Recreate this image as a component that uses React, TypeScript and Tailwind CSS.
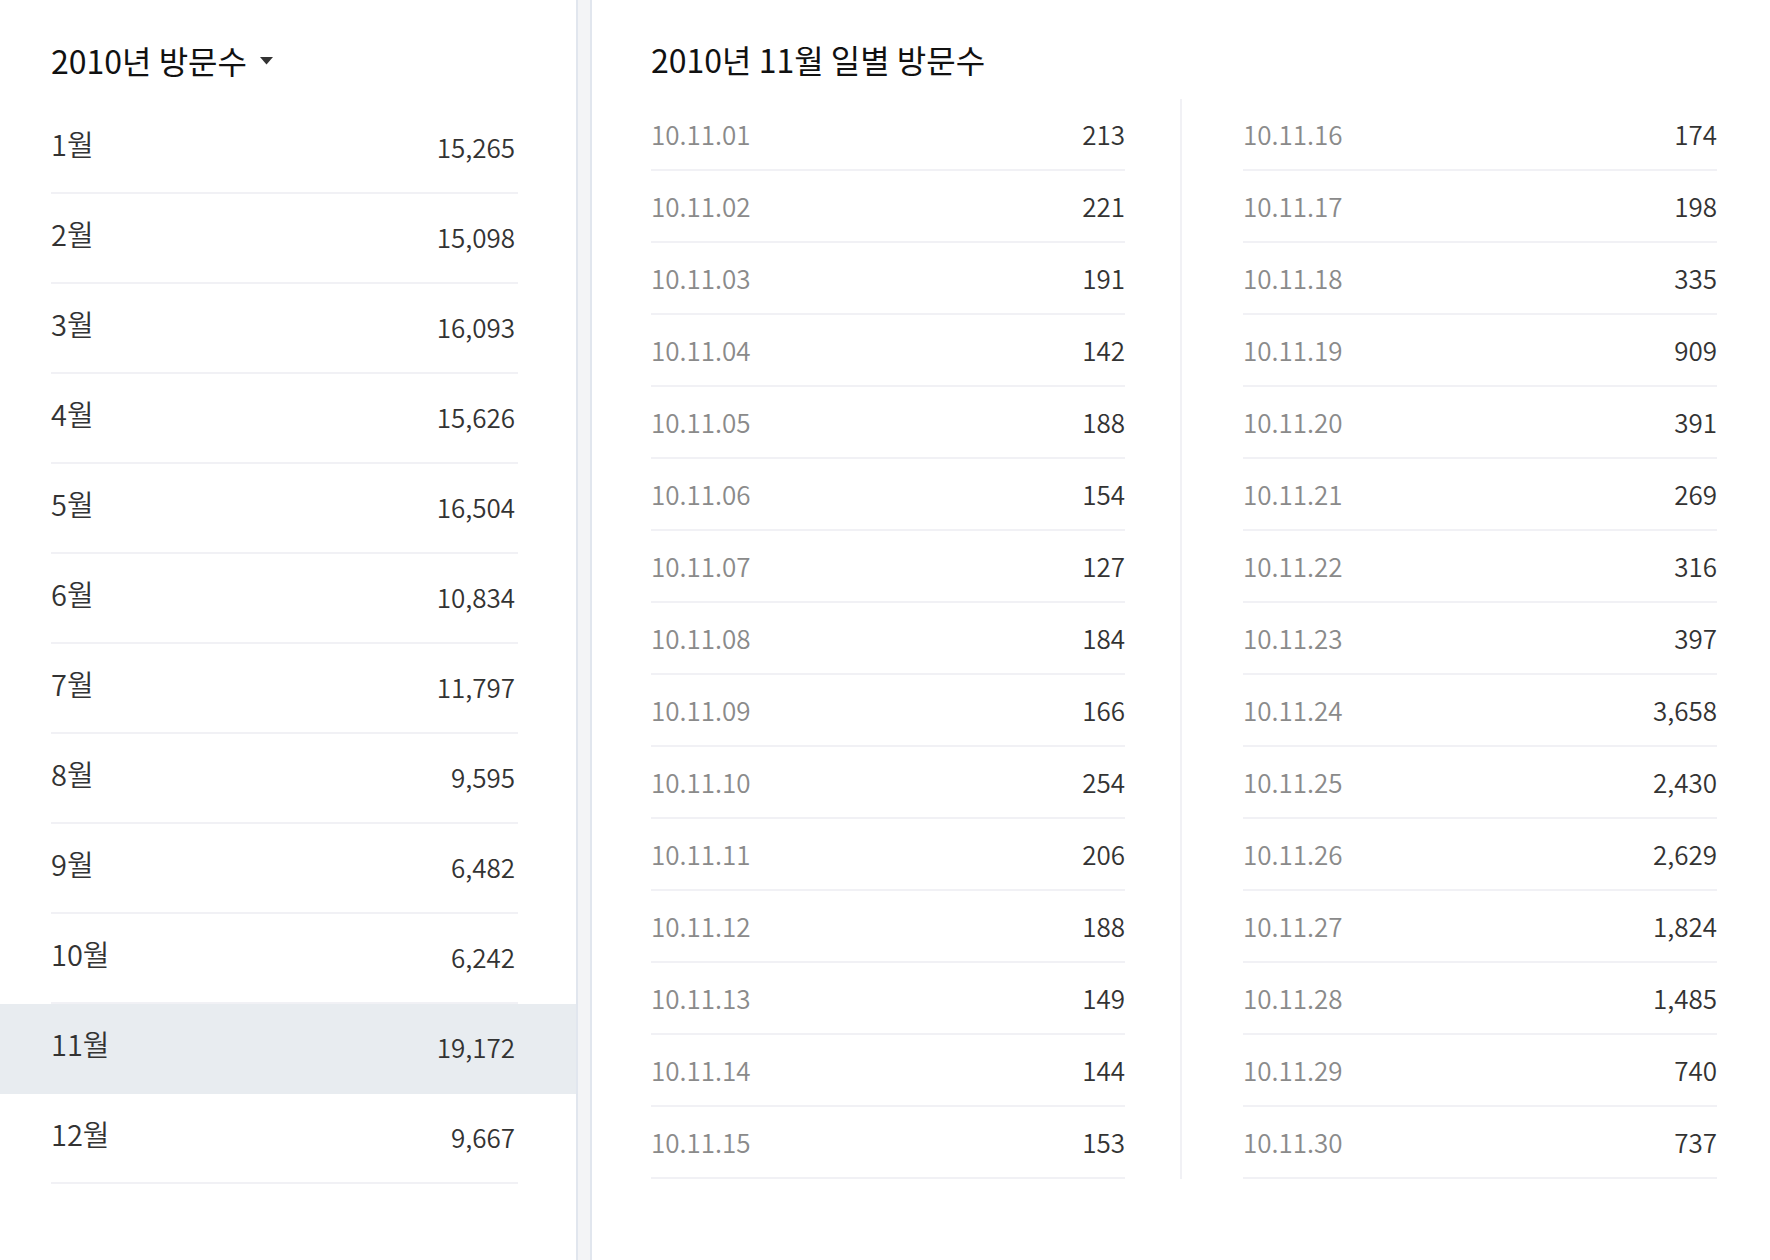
import React from "react";

const months: [string, string][] = [
  ["1월", "15,265"],
  ["2월", "15,098"],
  ["3월", "16,093"],
  ["4월", "15,626"],
  ["5월", "16,504"],
  ["6월", "10,834"],
  ["7월", "11,797"],
  ["8월", "9,595"],
  ["9월", "6,482"],
  ["10월", "6,242"],
  ["11월", "19,172"],
  ["12월", "9,667"],
];

const col1: [string, string][] = [
  ["10.11.01", "213"],
  ["10.11.02", "221"],
  ["10.11.03", "191"],
  ["10.11.04", "142"],
  ["10.11.05", "188"],
  ["10.11.06", "154"],
  ["10.11.07", "127"],
  ["10.11.08", "184"],
  ["10.11.09", "166"],
  ["10.11.10", "254"],
  ["10.11.11", "206"],
  ["10.11.12", "188"],
  ["10.11.13", "149"],
  ["10.11.14", "144"],
  ["10.11.15", "153"],
];

const col2: [string, string][] = [
  ["10.11.16", "174"],
  ["10.11.17", "198"],
  ["10.11.18", "335"],
  ["10.11.19", "909"],
  ["10.11.20", "391"],
  ["10.11.21", "269"],
  ["10.11.22", "316"],
  ["10.11.23", "397"],
  ["10.11.24", "3,658"],
  ["10.11.25", "2,430"],
  ["10.11.26", "2,629"],
  ["10.11.27", "1,824"],
  ["10.11.28", "1,485"],
  ["10.11.29", "740"],
  ["10.11.30", "737"],
];

function DayColumn({ rows }: { rows: [string, string][] }) {
  return (
    <div className="w-[474px] flex flex-col">
      {rows.map(([d, v]) => (
        <div
          key={d}
          className="h-[72px] flex items-center justify-between border-b-2 border-[#f1f1f5]"
        >
          <span className="text-[26px] leading-[30px] text-[#8a8a8a]">{d}</span>
          <span className="text-[26px] leading-[30px] text-[#333333]">{v}</span>
        </div>
      ))}
    </div>
  );
}

export default function App() {
  return (
    <div
      className="w-[1770px] h-[1260px] flex bg-white overflow-hidden font-[350]"
      style={{ fontFamily: '"Noto Sans CJK KR", "Noto Sans", sans-serif' }}
    >
      <div className="w-[576px] flex flex-col shrink-0">
        <div className="pt-[42px] pl-[51px] h-[104px]">
          <div className="flex items-center gap-[13px] h-[36px]">
            <div className="text-[32px] leading-[36px] text-[#111111] font-normal">2010년 방문수</div>
            <svg width="13" height="8" viewBox="0 0 13 8" className="mt-[2px]">
              <path d="M0 0 L13 0 L6.5 7.5 Z" fill="#333333" />
            </svg>
          </div>
        </div>
        <div className="flex flex-col">
          {months.map(([m, v]) => {
            const sel = m === "11월";
            return (
              <div key={m} className={sel ? "bg-[#e8ecf0]" : ""}>
                <div
                  className={
                    "ml-[51px] w-[467px] h-[90px] flex items-center justify-between border-b-2 " +
                    (sel ? "border-transparent" : "border-[#f1f1f5]")
                  }
                >
                  <span className="text-[29px] leading-[30px] text-[#333333] relative top-[-5px]">{m}</span>
                  <span className="text-[26px] leading-[30px] text-[#333333] pr-[3px] relative top-[-1px]">{v}</span>
                </div>
              </div>
            );
          })}
        </div>
      </div>
      <div className="w-[16px] shrink-0 border-x-2 border-[#e1e6ee] bg-[#f3f4f6]" />
      <div className="flex-1 flex flex-col pl-[59px]">
        <div className="pt-[41px] h-[78px]">
          <div className="text-[32px] leading-[36px] text-[#111111] font-normal">2010년 11월 일별 방문수</div>
        </div>
        <div className="mt-[21px] flex">
          <DayColumn rows={col1} />
          <div className="w-[118px] pl-[55px]">
            <div className="w-[2px] h-[1080px] bg-[#f1f1f5]" />
          </div>
          <DayColumn rows={col2} />
        </div>
      </div>
    </div>
  );
}
